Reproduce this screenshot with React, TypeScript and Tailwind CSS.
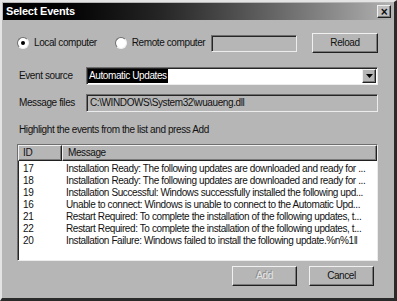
import React from 'react';

const rows = [
  { id: '17', msg: 'Installation Ready: The following updates are downloaded and ready for ...' },
  { id: '18', msg: 'Installation Ready: The following updates are downloaded and ready for ...' },
  { id: '19', msg: 'Installation Successful: Windows successfully installed the following upd...' },
  { id: '16', msg: 'Unable to connect: Windows is unable to connect to the Automatic Upd...' },
  { id: '21', msg: 'Restart Required: To complete the installation of the following updates, t...' },
  { id: '22', msg: 'Restart Required: To complete the installation of the following updates, t...' },
  { id: '20', msg: 'Installation Failure: Windows failed to install the following update.%n%1\u2016' },
];

// classic 3D borders
const raised = 'border border-t-[#f0f0f0] border-l-[#f0f0f0] border-r-[#202020] border-b-[#202020] shadow-[inset_-1px_-1px_0_#7a7a7a]';
const sunken = 'border border-t-[#6e6e6e] border-l-[#6e6e6e] border-r-[#ececec] border-b-[#ececec] shadow-[inset_1px_1px_0_#262626]';

const Radio: React.FC<{ checked?: boolean; label: string }> = ({ checked, label }) => (
  <div className="flex items-center shrink-0">
    <div className="w-[12px] h-[12px] shrink-0 rounded-full bg-white border border-t-[#6e6e6e] border-l-[#6e6e6e] border-r-[#f0f0f0] border-b-[#f0f0f0] flex items-center justify-center">
      {checked && <div className="w-[4px] h-[4px] rounded-full bg-black" />}
    </div>
    <span className="ml-[5px]">{label}</span>
  </div>
);

const App: React.FC = () => {
  return (
    <div
      className="w-[397px] h-[301px] overflow-hidden whitespace-nowrap bg-[#b6b6b6] text-[10px] tracking-[-0.4px] leading-none text-[#111] border-t-2 border-l-2 border-t-[#e4e4e4] border-l-[#e4e4e4] border-r-[3px] border-b-[3px] border-r-[#2a2a2a] border-b-[#2a2a2a] flex flex-col"
      style={{ fontFamily: '"Liberation Sans", Arial, sans-serif' }}
    >
      {/* title bar */}
      <div className="mx-[1px] mt-[1px] h-[17px] shrink-0 flex items-center justify-between bg-gradient-to-r from-black via-[#252525] via-40% to-[#b2b2b2] pl-[3px] pr-[2px]">
        <span className="text-white font-bold text-[11px] tracking-[-0.2px]">Select Events</span>
        <div className={`w-[14px] h-[13px] bg-[#c0c0c0] ${raised} flex items-center justify-center text-[12px] font-bold leading-none`}>×</div>
      </div>

      <div className="flex flex-col pl-[15px] pr-[16px]">
        {/* computer selection */}
        <div className="flex items-center h-[20px] mt-[13px]">
          <Radio checked label="Local computer" />
          <div className="ml-[18px]">
            <Radio label="Remote computer" />
          </div>
          <div className="flex-1" />
          <div className={`w-[86px] h-[17px] shrink-0 bg-[#b6b6b6] ${sunken}`} />
          <div className={`ml-[15px] w-[66px] h-[20px] shrink-0 bg-[#b6b6b6] ${raised} flex items-center justify-center`}>Reload</div>
        </div>

        {/* event source */}
        <div className="flex items-center mt-[14px]">
          <span className="w-[69px] shrink-0 pl-[2px]">Event source</span>
          <div className={`flex-1 h-[18px] bg-white ${sunken} flex items-center pl-[1px] pr-[1px]`}>
            <span className="bg-black text-white px-[1px] py-[2px]">Automatic Updates</span>
            <div className="flex-1" />
            <div className={`w-[14px] h-[14px] bg-[#b6b6b6] ${raised} flex items-center justify-center`}>
              <svg width="7" height="4" viewBox="0 0 7 4"><path d="M0 0h7L3.5 4z" fill="#000" /></svg>
            </div>
          </div>
        </div>

        {/* message files */}
        <div className="flex items-center mt-[9px]">
          <span className="w-[69px] shrink-0 pl-[2px]">Message files</span>
          <div className={`flex-1 h-[18px] bg-[#b6b6b6] ${sunken} flex items-center pl-[3px]`}>
            C:\WINDOWS\System32\wuaueng.dll
          </div>
        </div>

        <div className="mt-[13px] pl-[2px]">Highlight the events from the list and press Add</div>

        {/* list view */}
        <div className={`mt-[9px] h-[117px] shrink-0 bg-white ${sunken} flex flex-col overflow-hidden`}>
          <div className="flex h-[16px] shrink-0">
            <div className={`w-[44px] shrink-0 bg-[#b6b6b6] ${raised} flex items-center pl-[4px]`}>ID</div>
            <div className={`flex-1 bg-[#b6b6b6] ${raised} flex items-center pl-[5px]`}>Message</div>
          </div>
          <div className="pt-[2px]">
            {rows.map((r) => (
              <div key={r.id + r.msg} className="flex h-[12px] items-center">
                <span className="w-[48px] shrink-0 pl-[5px]">{r.id}</span>
                <span>{r.msg}</span>
              </div>
            ))}
          </div>
        </div>

        {/* buttons */}
        <div className="flex justify-end mt-[5px] pr-[4px] gap-[12px]">
          <div className={`w-[65px] h-[20px] bg-[#b6b6b6] ${raised} flex items-center justify-center text-[#e6e6e6] [text-shadow:-1px_-1px_0_#8a8a8a]`}>Add</div>
          <div className={`w-[65px] h-[20px] bg-[#b6b6b6] ${raised} flex items-center justify-center`}>Cancel</div>
        </div>
      </div>
    </div>
  );
};

export default App;
